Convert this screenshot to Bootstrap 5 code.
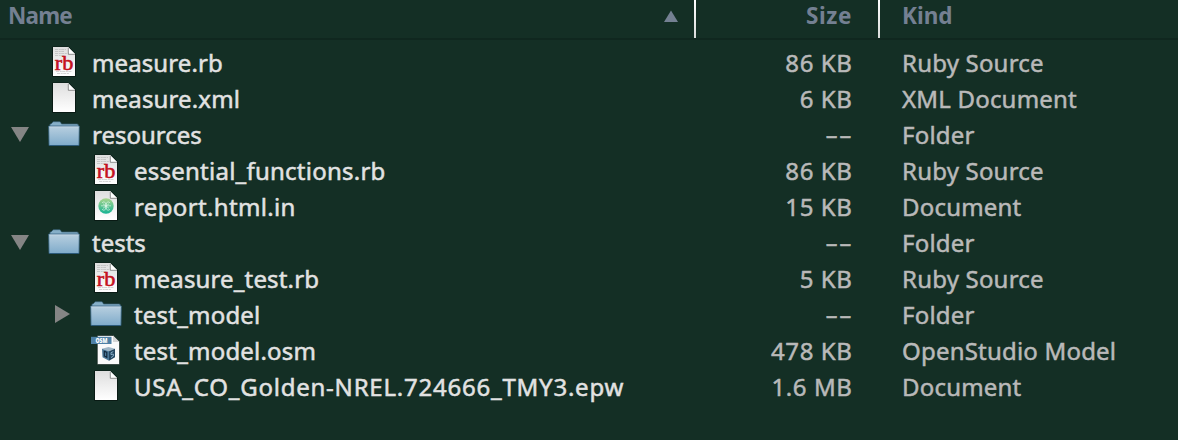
<!DOCTYPE html>
<html lang="en">
<head>
<meta charset="utf-8">
<meta name="viewport" content="width=device-width, initial-scale=1">
<title>Files</title>
<link href="https://cdn.jsdelivr.net/npm/bootstrap@5.3.0/dist/css/bootstrap.min.css" rel="stylesheet">
<style>
  body { background:#142f25; color:#e2e2e2; font:24px/36px "Noto Sans","Open Sans",sans-serif; height:440px; overflow:hidden; }
  .file-head { height:40px; border-bottom:2px solid #10271f; color:#748092; font-weight:700; font-size:22.5px; line-height:32px; }
  .file-list { padding-top:5px; }
  .file-line { height:36px; -webkit-text-stroke:.5px currentColor; }
  .c-name { width:694px; padding-left:8px; }
  .c-size { width:182px; padding-right:26px; text-align:right; }
  .c-kind { padding-left:22px; }
  .head-name { letter-spacing:-.8px; }
  .head-size { letter-spacing:.6px; }
  .file-line .c-size, .file-line .c-kind { color:#b9b9b9; }
  .file-line .c-size { width:186px; padding-right:27.5px; letter-spacing:.6px; }
  .file-line .c-name { padding-left:0; }
  .file-line .c-kind { padding-left:22px; letter-spacing:.2px; }
  .dashes { display:inline-block; transform:translateY(-1px) scaleX(1.65); transform-origin:right; }
  .split { width:2px; height:38px; background:linear-gradient(#fff,#d9dbda); }
  .twist { width:42px; height:36px; flex:none; }
  .ico { width:50px; height:36px; flex:none; }
  .indent { margin-left:42px; }
</style>
</head>
<body>
<svg class="position-absolute" width="0" height="0" aria-hidden="true">
  <defs>
    <linearGradient id="paper" x1="0" y1="0" x2="0" y2="1"><stop offset="0" stop-color="#dedede"/><stop offset="1" stop-color="#fff"/></linearGradient>
    <linearGradient id="blue" x1="0" y1="0" x2="0" y2="1"><stop offset="0" stop-color="#b9d0e0"/><stop offset="1" stop-color="#7fabca"/></linearGradient>
    <linearGradient id="green" x1="0" y1="0" x2="0" y2="1"><stop offset="0" stop-color="#a9d58c"/><stop offset="1" stop-color="#16b394"/></linearGradient>
    <symbol id="i-page" viewBox="0 0 50 36">
      <path d="M10.500 2H26.500L33.500 9V31.500H10.500Z" fill="none" stroke="#091a14"/>
      <path d="M11 2H26L33 9V31H11Z" fill="url(#paper)"/>
      <path d="M26 2L33 9L27 9Z" fill="#fff"/>
      <path d="M26.300 3V9.300H33" fill="none" stroke="#666" stroke-opacity=".75" stroke-width=".9"/>
    </symbol>
    <symbol id="i-rb" viewBox="0 0 50 36">
      <use href="#i-page" width="50" height="36"/>
      <path d="M13 4.500H24M13 6.500H22M13 8.500H25M13 10.500H23M14 26.500H30M15 28.500H27" stroke="#999" stroke-opacity=".5" stroke-width=".8" stroke-dasharray="3 .7 2 .5"/>
      <text x="12.800" y="24.800" font-family="Liberation Serif,serif" font-size="21" textLength="18.500" lengthAdjust="spacingAndGlyphs" fill="#c5121e" stroke="#c5121e" stroke-width=".6">rb</text>
    </symbol>
    <symbol id="i-html" viewBox="0 0 50 36">
      <use href="#i-page" width="50" height="36"/>
      <circle cx="22" cy="17" r="7.700" fill="url(#green)"/>
      <path transform="translate(0 -.7)" d="M18 14.500Q20 12.500 21.500 14.500V21Q20 23 18 21M26 14.500Q24 12.500 22.500 14.500V21Q24 23 26 21M17 17.500H27M19 15.500L25 20M25 15.500L19 20" fill="none" stroke="#e4f8ec" stroke-opacity=".7" stroke-width=".9"/>
    </symbol>
    <symbol id="i-osm" viewBox="0 0 50 36">
      <path d="M13.300 2.500H29L35.500 9V31.500H13.300Z" fill="#fafafa" stroke="#091a14" stroke-width=".6"/>
      <path d="M29 2.500V9H35.500Z" fill="#d5d5d5"/>
      <path d="M7 3.800H27.500V11H7Z" fill="#4f81a6"/>
      <text x="11.500" y="10" font-family="Open Sans,sans-serif" font-size="7" font-weight="800" textLength="12" lengthAdjust="spacingAndGlyphs" fill="#fff" stroke="none">OSM</text>
      <g transform="translate(0 .8)">
      <path d="M18 15L24.500 13.300L31 15L25 17.500Z" fill="#9fb6c6"/>
      <path d="M18 15L25 17.500V27L18.500 23.500Z" fill="#4b7898"/>
      <path d="M31 15L25 17.500V27L31 23.500Z" fill="#244661"/>
      <path d="M22.800 18.500L20.300 17.600V22.200L22.800 23.500Z" fill="none" stroke="#10263a" stroke-width="1.100"/>
      <path d="M29.300 17.800L27 18.900V20.800L29.300 20.200V22.300L27 23.800" fill="none" stroke="#8eb4cd" stroke-width=".9"/>
      </g>
    </symbol>
    <symbol id="i-folder" viewBox="0 0 50 36">
      <g transform="translate(0 4)">
      <path d="M8 5V3H9L10.500 1.500Q10.800 .7 11.600 .7H17.500Q18.500 .7 18.700 1.500L19.500 3H35Q36.500 3 36.500 4.500V6H8Z" fill="#86afc8" stroke="#375f75" stroke-width=".7"/>
      <path d="M6.700 5H37.300L37 24.500H7Z" fill="url(#blue)" stroke="#33617e" stroke-width=".8"/>
      <path d="M7.300 6H36.700" stroke="#d1e2ed" stroke-opacity=".5"/>
      <path d="M7 24.500H37" stroke="#2c5a7a" stroke-width="1"/>
      </g>
    </symbol>
    <symbol id="i-down" viewBox="0 0 42 36"><path d="M11 10H29L20 25Z" fill="#858585"/></symbol>
    <symbol id="i-right" viewBox="0 0 42 36"><path d="M13 8V26L28 17Z" fill="#858585"/></symbol>
  </defs>
</svg>

<header class="file-head d-flex">
  <div class="c-name d-flex justify-content-between"><span class="head-name">Name</span>
    <svg width="30" height="38" viewBox="0 0 30 38"><path d="M0 22L7 10.500L14 22Z" fill="#748092"/></svg></div>
  <div class="split"></div>
  <div class="c-size head-size">Size</div>
  <div class="split"></div>
  <div class="c-kind">Kind</div>
</header>
<main class="file-list" id="files"></main>

<script>
  // depth, disclosure state, icon, name, letter spacing, size, kind
  const files = [
    [0, '', 'rb', 'measure.rb', .1, '86 KB', 'Ruby Source'],
    [0, '', 'page', 'measure.xml', .15, '6 KB', 'XML Document'],
    [0, 'down', 'folder', 'resources', 0, '--', 'Folder'],
    [1, '', 'rb', 'essential_functions.rb', .24, '86 KB', 'Ruby Source'],
    [1, '', 'html', 'report.html.in', .35, '15 KB', 'Document'],
    [0, 'down', 'folder', 'tests', 0, '--', 'Folder'],
    [1, '', 'rb', 'measure_test.rb', .15, '5 KB', 'Ruby Source'],
    [1, 'right', 'folder', 'test_model', .2, '--', 'Folder'],
    [1, '', 'osm', 'test_model.osm', .2, '478 KB', 'OpenStudio Model'],
    [1, '', 'page', 'USA_CO_Golden-NREL.724666_TMY3.epw', .77, '1.6 MB', 'Document']
  ];
  document.getElementById('files').innerHTML = files.map(([d, t, i, n, ls, s, k]) => `
    <div class="file-line d-flex">
      <div class="c-name d-flex">
        <svg class="twist ${d ? 'indent' : ''}">${t ? `<use href="#i-${t}"/>` : ''}</svg>
        <svg class="ico"><use href="#i-${i}"/></svg>
        <span class="text-nowrap" style="letter-spacing:${ls}px">${n}</span>
      </div>
      <div class="c-size">${s === '--' ? '<span class="dashes">--</span>' : s}</div>
      <div class="c-kind text-nowrap">${k}</div>
    </div>`).join('');
</script>
<script src="https://cdn.jsdelivr.net/npm/bootstrap@5.3.0/dist/js/bootstrap.bundle.min.js"></script>
</body>
</html>
